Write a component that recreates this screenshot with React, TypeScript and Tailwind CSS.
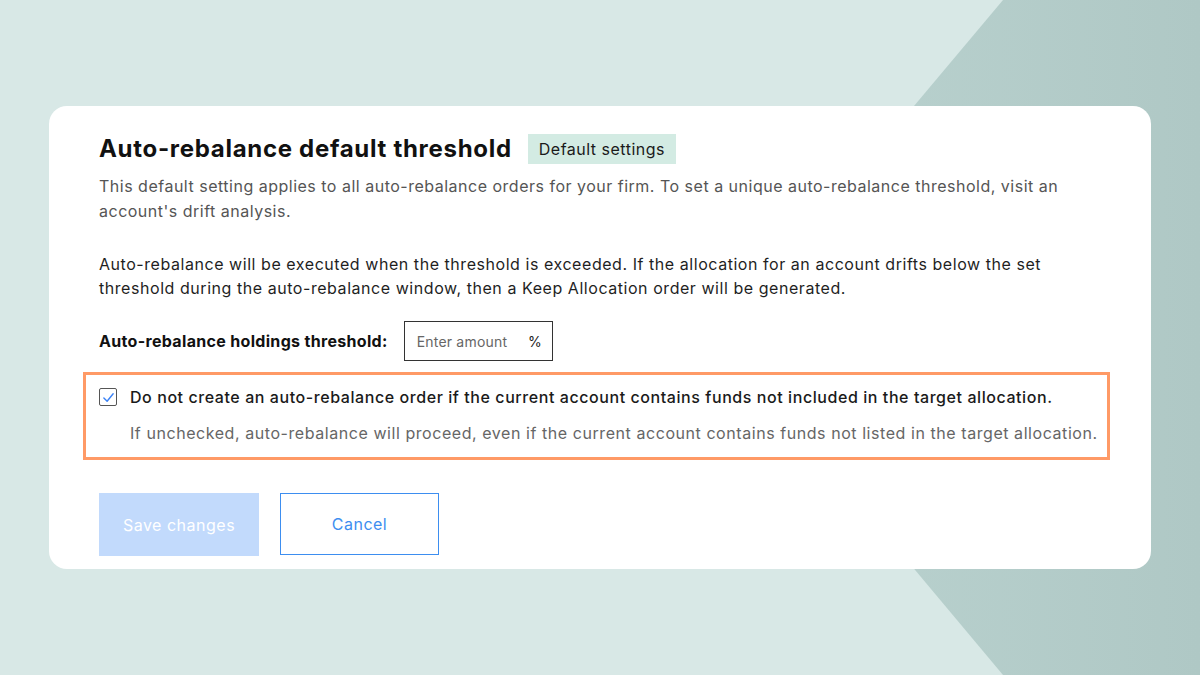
import React from "react";

export default function App() {
  return (
    <div
      className="relative w-[1200px] h-[675px] overflow-hidden bg-[#d8e8e6]"
      style={{ fontFamily: "Inter, 'Noto Sans', sans-serif" }}
    >
      <svg className="absolute inset-0" width="1200" height="675" viewBox="0 0 1200 675">
        <defs>
          <linearGradient id="g" x1="0" y1="0" x2="1" y2="0">
            <stop offset="0" stopColor="#bcd4d1" />
            <stop offset="1" stopColor="#afc8c5" />
          </linearGradient>
        </defs>
        <polygon points="1003,0 1200,0 1200,675 1003,675 720,337" fill="url(#g)" />
      </svg>
      <div className="relative pt-[106px] pl-[49px]">
        <div className="w-[1102px] h-[463px] bg-white rounded-[18px] pt-[28px] px-[50px]">
          <div className="flex items-center h-[30px]">
            <h1 className="text-[24px] font-bold text-[#111] tracking-[0.7px]">Auto-rebalance default threshold</h1>
            <span className="ml-[16px] h-[30px] px-[11px] flex items-center bg-[#d3ebe3] text-[16px] text-[#1a1a1a] tracking-[0.5px]">
              Default settings
            </span>
          </div>
          <p className="mt-[10px] text-[16px] leading-[25px] text-[#555] tracking-[0.5px] whitespace-nowrap">
            This default setting applies to all auto-rebalance orders for your firm. To set a unique auto-rebalance threshold, visit an
            <br />
            account's drift analysis.
          </p>
          <p className="mt-[28px] text-[16px] leading-[24px] text-[#1f1f1f] tracking-[0.55px] whitespace-nowrap">
            Auto-rebalance will be executed when the threshold is exceeded. If the allocation for an account drifts below the set
            <br />
            threshold during the auto-rebalance window, then a Keep Allocation order will be generated.
          </p>
          <div className="mt-[21px] flex items-center">
            <span className="text-[16px] font-bold text-[#111] tracking-[0.32px]">Auto-rebalance holdings threshold:</span>
            <div className="ml-[16px] w-[149px] h-[40px] border border-[#333] flex items-center pl-[12px] pr-[10px] justify-between">
              <span className="text-[14px] text-[#666] tracking-[0.2px]">Enter amount</span>
              <span className="text-[14px] text-[#222]">%</span>
            </div>
          </div>
          <div className="mt-[11px] ml-[-16px] mr-[-9px] h-[88px] border-[3px] border-[#ff9a66] pl-[13px] pt-[10px]">
            <div className="flex items-center h-[24px]">
              <div className="w-[18px] h-[18px] border-[1.5px] border-[#555] rounded-[2px] flex items-center justify-center">
                <svg width="13" height="13" viewBox="0 0 14 14" fill="none">
                  <path d="M2 7.5 L5.5 11 L12 3" stroke="#3b82f6" strokeWidth="1.5" strokeLinecap="round" strokeLinejoin="round" />
                </svg>
              </div>
              <span className="ml-[13px] text-[16px] font-medium text-[#1a1a1a] tracking-[0.57px] whitespace-nowrap">
                Do not create an auto-rebalance order if the current account contains funds not included in the target allocation.
              </span>
            </div>
            <div className="mt-[12px] pl-[31px] h-[24px] flex items-center text-[16px] text-[#666] tracking-[0.56px] whitespace-nowrap">
              If unchecked, auto-rebalance will proceed, even if the current account contains funds not listed in the target allocation.
            </div>
          </div>
          <div className="mt-[33px] flex gap-[21px]">
            <button className="w-[160px] h-[63px] bg-[#c2dafc] text-white text-[16px] tracking-[0.5px]">Save changes</button>
            <button className="w-[159px] h-[62px] border border-[#3d8ef0] text-[#3d8ef0] text-[16px] tracking-[0.5px]">Cancel</button>
          </div>
        </div>
      </div>
    </div>
  );
}
